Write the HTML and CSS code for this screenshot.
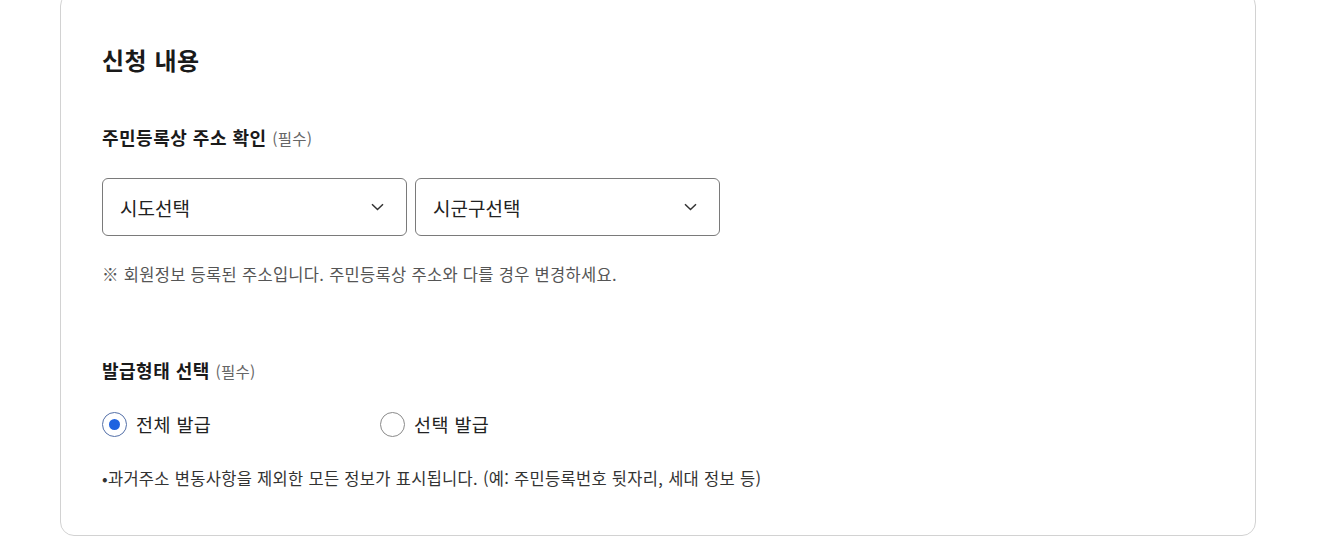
FILE: index.html
```html
<!DOCTYPE html>
<html lang="ko">
  <head>
    <meta charset="utf-8" />
    <meta name="viewport" content="width=device-width,initial-scale=1.0" />
    <title>신청 내용</title>
    <link rel="stylesheet" href="styles.css">
  </head>

  <body>
    <div class="page">
      <!-- 신청 내용 -->
      <section class="card">
        <h2 class="card-title">신청 내용</h2>

        <div class="field-label">주민등록상 주소 확인 <span class="req">(필수)</span></div>
        <div class="select-row">
          <div class="select">
            <span>시도선택</span>
            <svg class="chev" width="13" height="8" viewBox="0 0 13 8"><path d="M1 1.2l5.5 5.3L12 1.2" fill="none" stroke="#333" stroke-width="1.5"/></svg>
          </div>
          <div class="select">
            <span>시군구선택</span>
            <svg class="chev" width="13" height="8" viewBox="0 0 13 8"><path d="M1 1.2l5.5 5.3L12 1.2" fill="none" stroke="#333" stroke-width="1.5"/></svg>
          </div>
        </div>
        <p class="note">※ 회원정보 등록된 주소입니다. 주민등록상 주소와 다를 경우 변경하세요.</p>

        <div class="field-label second">발급형태 선택 <span class="req">(필수)</span></div>
        <div class="radio-row">
          <label class="radio checked"><span class="dot"></span>전체 발급</label>
          <label class="radio"><span class="dot"></span>선택 발급</label>
        </div>
        <p class="bullet">•과거주소 변동사항을 제외한 모든 정보가 표시됩니다. (예: 주민등록번호 뒷자리, 세대 정보 등)</p>
      </section>
    </div>
  </body>
</html>
```

FILE: styles.css
```css
body {
  margin: 0;
  background: #fff;
  color: #222;
  font-family: "Noto Sans CJK KR", "Noto Sans", sans-serif;
}
.page {
  padding: 0 64px 0 60px;
}
.card {
  margin-top: -8px;
  border: 1px solid #d2d2d2;
  border-radius: 14px;
  padding: 50px 42px 46px 41px;
}
.card-title {
  margin: 0;
  font-size: 24px;
  line-height: 34px;
  font-weight: 700;
  color: #1a1a1a;
  letter-spacing: 0.5px;
}
.field-label {
  margin-top: 48px;
  font-size: 18px;
  line-height: 24px;
  font-weight: 700;
  color: #1a1a1a;
  letter-spacing: 0.5px;
}
.field-label.second {
  margin-top: 73px;
}
.req {
  font-size: 15.5px;
  font-weight: 400;
  color: #666;
  letter-spacing: 0.3px;
}
.select-row {
  display: flex;
  gap: 8px;
  margin-top: 28px;
}
.select {
  box-sizing: border-box;
  width: 305px;
  height: 58px;
  border: 1px solid #7a7a7a;
  border-radius: 6px;
  padding: 0 22px 0 17px;
  display: flex;
  align-items: center;
  justify-content: space-between;
  font-size: 19px;
  color: #222;
}
.note {
  margin: 27px 0 0;
  font-size: 16.5px;
  line-height: 22px;
  letter-spacing: 0.3px;
  color: #555;
}
.radio-row {
  display: flex;
  margin-top: 27px;
}
.radio {
  width: 278px;
  height: 28px;
  display: flex;
  align-items: center;
  gap: 9px;
  font-size: 18.5px;
  letter-spacing: 0.4px;
  color: #222;
}
.dot {
  box-sizing: border-box;
  width: 25px;
  height: 25px;
  border: 1.5px solid #8a8a8a;
  border-radius: 50%;
  display: flex;
  align-items: center;
  justify-content: center;
}
.radio.checked .dot {
  border-color: #5470a8;
}
.radio.checked .dot::after {
  content: "";
  width: 11px;
  height: 11px;
  border-radius: 50%;
  background: #1f63e0;
}
.bullet {
  margin: 29px 0 0;
  font-size: 16.5px;
  line-height: 22px;
  letter-spacing: 0.3px;
  color: #333;
}
```
